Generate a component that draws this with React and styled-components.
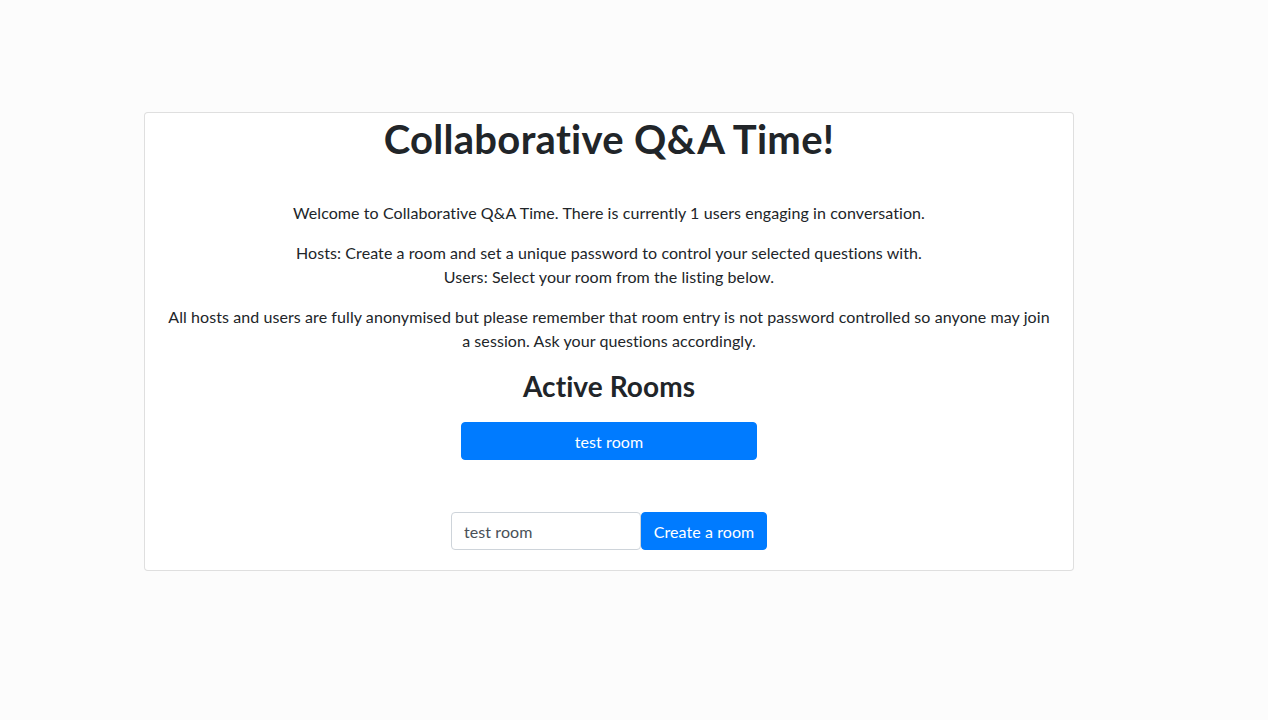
import React, { useState } from 'react';
import styled, { createGlobalStyle } from 'styled-components';

const GlobalStyle = createGlobalStyle`
  html, body {
    margin: 0;
    padding: 0;
    background: #fcfcfc;
  }

  body {
    font-family: Lato, "Noto Sans", sans-serif;
    font-size: 16px;
    line-height: 1.5;
    letter-spacing: 0.08px;
    color: #212529;
  }

  * {
    box-sizing: border-box;
  }
`;

const App = () => {
  const [roomName, setRoomName] = useState('test room');
  const rooms = ['test room'];
  const userCount = 1;

  return (
    <>
      <GlobalStyle />
      <Page>
        <Card>
          <Title>Collaborative Q&amp;A Time!</Title>

          <Intro>
            Welcome to Collaborative Q&amp;A Time. There is currently {userCount} users
            engaging in conversation.
          </Intro>
          <Paragraph>
            Hosts: Create a room and set a unique password to control your selected
            questions with.
            <br />
            Users: Select your room from the listing below.
          </Paragraph>
          <Paragraph>
            All hosts and users are fully anonymised but please remember that room entry
            is not password controlled so anyone may join a session. Ask your questions
            accordingly.
          </Paragraph>

          <SubTitle>Active Rooms</SubTitle>
          <RoomList>
            {rooms.map((room) => (
              <RoomButton key={room}>{room}</RoomButton>
            ))}
          </RoomList>

          <CreateForm onSubmit={(e) => e.preventDefault()}>
            <RoomInput
              type="text"
              value={roomName}
              onChange={(e) => setRoomName(e.target.value)}
            />
            <CreateButton type="submit">Create a room</CreateButton>
          </CreateForm>
        </Card>
      </Page>
    </>
  );
};

const Page = styled.div`
  width: 100%;
  min-height: 720px;
  padding: 112px 0 0 144px;
`;

const Card = styled.div`
  width: 930px;
  padding: 2px 20px 20px;

  display: flex;
  flex-direction: column;
  align-items: center;

  background: #ffffff;
  border: 1px solid rgba(0, 0, 0, 0.125);
  border-radius: 4px;
  text-align: center;
`;

const Title = styled.h1`
  margin: 0 0 38px;
  font-size: 40px;
  font-weight: 700;
  line-height: 1.2;
  letter-spacing: 0.3px;
`;

const Intro = styled.p`
  margin: 0 0 16px;
`;

const Paragraph = styled.p`
  margin: 0 0 16px;
`;

const SubTitle = styled.h2`
  margin: 0 0 19px;
  font-size: 28px;
  font-weight: 700;
  line-height: 34px;
`;

const RoomList = styled.div`
  display: flex;
  flex-direction: column;
  gap: 8px;
  margin-bottom: 52px;
`;

const RoomButton = styled.button`
  width: 296px;
  height: 38px;
  padding: 0 12px;

  font-family: inherit;
  font-size: 16px;
  letter-spacing: inherit;
  color: #ffffff;

  background: #007bff;
  border: 1px solid #007bff;
  border-radius: 4px;
  cursor: pointer;
`;

const CreateForm = styled.form`
  display: flex;
  justify-content: center;
`;

const RoomInput = styled.input`
  width: 190px;
  height: 38px;
  padding: 6px 12px;

  font-family: inherit;
  font-size: 16px;
  letter-spacing: inherit;
  color: #495057;

  background: #ffffff;
  border: 1px solid #ced4da;
  border-radius: 4px;
  outline: none;
`;

const CreateButton = styled.button`
  width: 126px;
  height: 38px;
  padding: 0 8px;

  font-family: inherit;
  font-size: 16px;
  letter-spacing: inherit;
  white-space: nowrap;
  color: #ffffff;

  background: #007bff;
  border: 1px solid #007bff;
  border-radius: 4px;
  cursor: pointer;
`;

export default App;
